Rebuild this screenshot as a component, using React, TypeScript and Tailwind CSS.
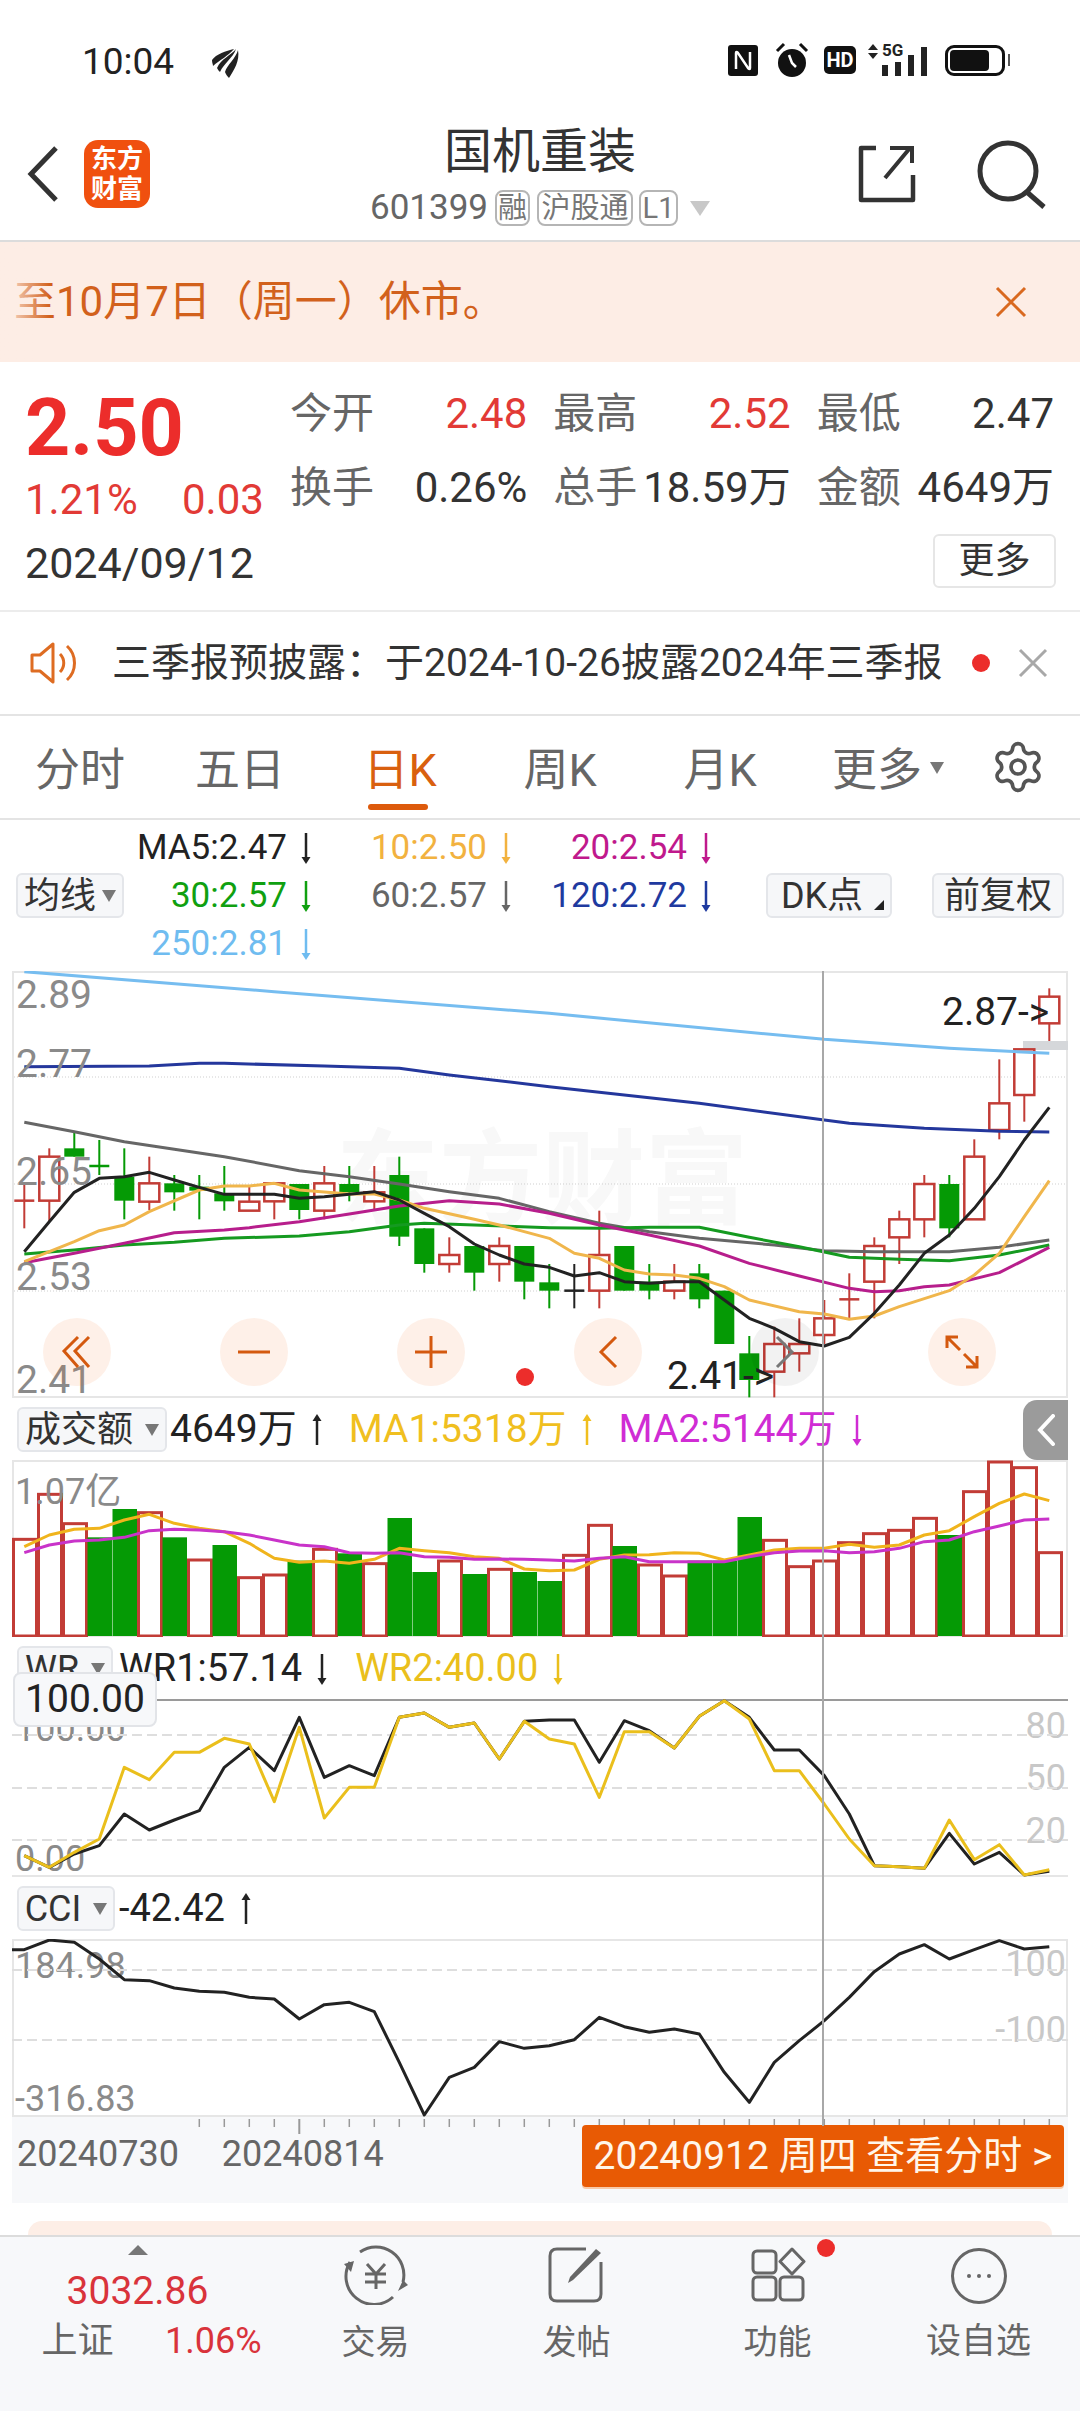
import { Settings } from 'lucide-react';

// chart data is read off the picture: "z" values are pixel rows in the reference crops
type Candle = [number, number, number, number, 'r' | 'g' | 'k'];

const CANDLES: Candle[] = [
  [675, 722, 722, 805, 'r'], [565, 590, 722, 785, 'r'], [515, 565, 590, 590, 'g'], [540, 618, 618, 645, 'g'],
  [565, 650, 722, 778, 'g'], [590, 670, 725, 750, 'r'], [645, 670, 697, 752, 'g'], [645, 680, 692, 778, 'g'],
  [618, 700, 724, 752, 'g'], [680, 725, 752, 752, 'r'], [670, 670, 724, 778, 'r'], [672, 672, 750, 778, 'g'],
  [618, 670, 752, 778, 'r'], [618, 672, 697, 724, 'g'], [618, 697, 724, 750, 'r'], [590, 645, 830, 858, 'g'],
  [805, 805, 912, 938, 'g'], [832, 885, 912, 938, 'r'], [858, 858, 938, 992, 'g'], [832, 858, 912, 965, 'r'],
  [858, 858, 965, 1018, 'g'], [912, 967, 992, 1045, 'g'], [912, 992, 992, 1045, 'k'], [752, 885, 992, 1045, 'r'],
  [858, 858, 992, 992, 'g'], [912, 965, 992, 1018, 'g'], [912, 965, 992, 1018, 'r'], [912, 940, 1018, 1045, 'g'],
  [992, 992, 1152, 1152, 'g'], [1128, 1180, 1260, 1312, 'g'], [1100, 1152, 1235, 1312, 'r'], [1075, 1152, 1180, 1235, 'r'],
  [1020, 1075, 1125, 1152, 'r'], [940, 1018, 1018, 1075, 'r'], [832, 858, 965, 1075, 'r'], [752, 778, 832, 912, 'r'],
  [645, 672, 778, 832, 'r'], [645, 672, 805, 832, 'g'], [538, 590, 778, 778, 'r'], [298, 430, 510, 538, 'r'],
  [268, 268, 405, 485, 'r'], [85, 110, 190, 243, 'r'],
];

const MA_LINES: { color: string; points: number[][] }[] = [
  { color: '#76bdf0', points: [[0, 35], [10, 95], [21, 160], [32, 238], [37, 265], [41, 280]] },
  { color: '#24379c', points: [[0, 320], [5, 318], [7, 310], [8, 310], [12, 318], [15, 325], [17, 345], [21, 380], [27, 430], [32, 480], [33, 490], [36, 505], [39, 514], [41, 516]] },
  { color: '#666666', points: [[0, 487], [2, 515], [4, 545], [6, 568], [8, 590], [11, 632], [13, 650], [15, 672], [17, 695], [19, 715], [21, 755], [23, 790], [25, 815], [27, 835], [30, 855], [32, 872], [34, 875], [37, 875], [39, 862], [41, 840]] },
  { color: '#159a20', points: [[0, 882], [2, 870], [4, 855], [6, 847], [8, 835], [11, 828], [13, 815], [15, 795], [16, 790], [21, 803], [23, 805], [25, 802], [27, 802], [29, 832], [31, 860], [33, 892], [35, 898], [37, 902], [39, 885], [41, 855]] },
  { color: '#b71e8c', points: [[0, 908], [2, 880], [4, 850], [6, 818], [8, 810], [9, 803], [11, 785], [13, 762], [15, 738], [17, 722], [19, 732], [21, 760], [23, 795], [25, 825], [27, 858], [29, 910], [31, 948], [33, 985], [34, 995], [35, 992], [36, 980], [37, 975], [39, 938], [41, 862]] },
  { color: '#f0b64c', points: [[0, 905], [2, 845], [3, 812], [4, 795], [5, 755], [7, 690], [8, 678], [9, 678], [10, 670], [11, 690], [13, 702], [14, 702], [15, 720], [16, 745], [18, 778], [19, 795], [21, 835], [22, 880], [23, 895], [24, 930], [25, 942], [26, 945], [27, 955], [28, 980], [29, 1020], [31, 1055], [32, 1062], [33, 1078], [34, 1068], [35, 1040], [37, 992], [38, 945], [39, 880], [40, 770], [41, 662]] },
];

const MA5 = [875, 785, 697, 655, 650, 637, 660, 682, 703, 703, 703, 715, 710, 703, 695, 720, 760, 800, 852, 885, 912, 922, 948, 938, 965, 970, 965, 965, 1020, 1075, 1105, 1145, 1158, 1132, 1060, 975, 880, 825, 745, 650, 540, 442];

const VOLUMES: [number, 'r' | 'g'][] = [
  [415, 'r'], [280, 'r'], [368, 'r'], [412, 'g'], [327, 'g'], [335, 'r'], [412, 'g'], [477, 'r'], [435, 'g'], [530, 'r'],
  [522, 'r'], [482, 'g'], [445, 'r'], [460, 'g'], [488, 'r'], [354, 'g'], [516, 'g'], [480, 'r'], [522, 'g'], [505, 'r'],
  [516, 'g'], [543, 'g'], [463, 'r'], [373, 'r'], [438, 'g'], [492, 'r'], [525, 'r'], [482, 'g'], [482, 'g'], [351, 'g'],
  [418, 'r'], [497, 'r'], [480, 'r'], [425, 'r'], [398, 'r'], [388, 'r'], [352, 'r'], [405, 'g'], [272, 'r'], [183, 'r'],
  [200, 'r'], [455, 'r'],
];
const VOL_MA1 = [440, 405, 388, 385, 360, 343, 370, 385, 395, 430, 475, 487, 483, 490, 478, 445, 452, 458, 470, 475, 507, 512, 510, 478, 465, 464, 458, 460, 480, 465, 450, 445, 445, 433, 442, 435, 405, 392, 350, 310, 282, 302];
const VOL_MA2 = [458, 435, 423, 420, 412, 392, 388, 390, 395, 405, 420, 435, 440, 458, 460, 458, 470, 472, 478, 477, 478, 480, 483, 475, 470, 485, 485, 485, 485, 470, 458, 453, 452, 458, 455, 445, 425, 420, 395, 378, 360, 357];

const WR1 = [650, 685, 645, 620, 525, 573, 543, 515, 385, 325, 395, 235, 415, 380, 410, 235, 222, 265, 252, 360, 247, 243, 243, 370, 245, 275, 327, 232, 185, 235, 333, 333, 410, 525, 680, 683, 688, 583, 675, 640, 708, 697];
const WR2 = [650, 685, 640, 600, 385, 422, 340, 340, 298, 315, 488, 265, 537, 445, 445, 235, 222, 265, 252, 360, 247, 300, 315, 475, 278, 278, 327, 232, 185, 240, 395, 395, 495, 600, 680, 683, 688, 543, 662, 617, 708, 692];
const CCI = [212, 183, 190, 240, 302, 305, 327, 337, 340, 355, 360, 420, 377, 370, 398, 550, 708, 595, 565, 488, 508, 500, 482, 415, 443, 460, 450, 465, 580, 670, 550, 485, 425, 355, 278, 225, 197, 240, 212, 185, 210, 203];

const cx = (i: number) => 12.3 + 25 * i;
const dense = (arr: number[], off: number) => arr.map((z, i) => `${cx(i)},${z / 3 - off}`).join(' ');
const sparse = (arr: number[][], off: number) => arr.map(([i, z]) => `${cx(i)},${z / 3 - off}`).join(' ');

const RED = '#c23c36';
const GREEN = '#059a05';

function Arrow({ up, color }: { up?: boolean; color: string }) {
  return (
    <svg width="14" height="36" viewBox="0 0 14 36" className="shrink-0">
      {up ? (
        <>
          <line x1="7" y1="6" x2="7" y2="33" stroke={color} strokeWidth="2.5" />
          <path d="M2.5 9 L7 2 L11.5 9 Z" fill={color} />
        </>
      ) : (
        <>
          <line x1="7" y1="3" x2="7" y2="30" stroke={color} strokeWidth="2.5" />
          <path d="M2.5 27 L7 34 L11.5 27 Z" fill={color} />
        </>
      )}
    </svg>
  );
}

function Caret() {
  return <span className="inline-block border-x-[7px] border-t-[12px] border-x-transparent border-t-[#777]" />;
}

function MaValue({ text, color }: { text: string; color: string }) {
  return (
    <div className="flex items-center justify-end gap-[12px] pr-[2px] text-[35px] leading-[48px]" style={{ color }}>
      <span>{text}</span>
      <Arrow color={color} />
    </div>
  );
}

function Quote({ label, value, color }: { label: string; value: string; color: string }) {
  return (
    <div className="flex h-[44px] items-center justify-between text-[42px] leading-[44px]">
      <span className="text-[#666]">{label}</span>
      <span className={color}>{value}</span>
    </div>
  );
}

function StatusBar() {
  return (
    <div className="flex h-[110px] items-start pl-[82px] pt-[42px] text-[#222]">
      <span className="text-[37px] leading-[40px]">10:04</span>
      <svg width="30" height="34" viewBox="0 0 30 34" className="ml-[37px] mt-[4px]">
        <path d="M23 3 C15 5 5 8 1 14 C1 17 2 18 2 20 C9 14 17 10 23 3 Z" fill="#222" />
        <path d="M25 3 C20 9 10 13 6 22 C7 24 8 25 9 26 C13 17 22 12 25 3 Z" fill="#222" />
        <path d="M27 4 C25 12 16 19 14 26 C15 29 17 31 18 32 C23 24 29 15 27 4 Z" fill="#222" />
      </svg>
      <div className="ml-auto mr-[70px] flex items-center">
        <svg width="30" height="31" viewBox="0 0 30 31">
          <rect width="30" height="31" rx="3" fill="#111" />
          <path d="M8 24 V8 Q8 6 10 8 L20 23 Q22 25 22 23 V7" stroke="#fff" strokeWidth="2.5" fill="none" />
        </svg>
        <svg width="36" height="36" viewBox="0 0 36 36" className="ml-[16px]">
          <circle cx="18" cy="21" r="14" fill="#111" />
          <path d="M15 13 L18 21 L22 25" stroke="#fff" strokeWidth="2.5" fill="none" />
          <path d="M3 9 L10 2 M33 9 L26 2" stroke="#111" strokeWidth="3" />
        </svg>
        <span className="ml-[14px] flex h-[28px] w-[32px] items-center justify-center rounded-[5px] bg-[#111] text-[20px] font-bold leading-none text-white">
          HD
        </span>
        <div className="relative ml-[12px] h-[32px] w-[59px]">
          <span className="absolute left-[14px] top-[-2px] text-[17px] font-bold leading-[17px]">5G</span>
          <span className="absolute left-0 top-0 border-x-[5px] border-b-[6px] border-x-transparent border-b-[#222]" />
          <span className="absolute left-0 top-[9px] border-x-[5px] border-t-[6px] border-x-transparent border-t-[#222]" />
          <div className="absolute bottom-0 right-0 flex items-end gap-[7px]">
            <span className="h-[11px] w-[6px] bg-[#222]" />
            <span className="h-[14px] w-[6px] bg-[#222]" />
            <span className="h-[21px] w-[6px] bg-[#222]" />
            <span className="h-[29px] w-[6px] bg-[#222]" />
          </div>
        </div>
        <div className="ml-[18px] flex items-center">
          <div className="flex h-[31px] w-[60px] items-center rounded-[9px] border-[3px] border-[#111] p-[2px]">
            <span className="h-full w-[39px] rounded-[4px] bg-[#111]" />
          </div>
          <span className="ml-[3px] h-[12px] w-[2px] bg-[#555]" />
        </div>
      </div>
    </div>
  );
}

function Header() {
  return (
    <div className="flex h-[132px] items-start border-b-2 border-[#dcdcdc]">
      <div className="flex w-[280px] items-center pl-[27px] pt-[30px]">
        <svg width="32" height="56" viewBox="0 0 32 56">
          <path d="M29 2 L4 28 L29 54" stroke="#333" strokeWidth="5" fill="none" />
        </svg>
        <div className="ml-[25px] flex h-[68px] w-[66px] items-center justify-center rounded-[14px] bg-[#f0500f] text-center text-[26px] font-bold leading-[30px] text-white">
          东方
          <br />
          财富
        </div>
      </div>
      <div className="flex flex-1 flex-col items-center pt-[14px]">
        <div className="text-[48px] leading-[56px] text-[#333]">国机重装</div>
        <div className="mt-[8px] flex h-[40px] items-center text-[#777]">
          <span className="text-[35px] leading-[40px] text-[#666]">601399</span>
          <span className="ml-[7px] flex h-[36px] w-[35px] items-center justify-center rounded-[8px] border-2 border-[#b5b5b5] text-[29px] leading-none">融</span>
          <span className="ml-[7px] flex h-[36px] w-[96px] items-center justify-center rounded-[8px] border-2 border-[#b5b5b5] text-[29px] leading-none">沪股通</span>
          <span className="ml-[6px] flex h-[36px] w-[39px] items-center justify-center rounded-[8px] border-2 border-[#b5b5b5] text-[29px] leading-none">L1</span>
          <span className="ml-[12px] border-x-[10px] border-t-[15px] border-x-transparent border-t-[#c8c8c8]" />
        </div>
      </div>
      <div className="flex w-[280px] items-start justify-end pr-[32px] pt-[29px]">
        <svg width="60" height="60" viewBox="0 0 60 60" className="mt-[6px]">
          <path d="M20 3 H5 V55 H57 V30" stroke="#333" strokeWidth="4.5" fill="none" strokeLinejoin="round" />
          <path d="M29 33 L54 3 M34 3 H56 V18" stroke="#333" strokeWidth="4" fill="none" />
        </svg>
        <svg width="72" height="70" viewBox="0 0 72 70" className="ml-[60px]">
          <circle cx="32" cy="32" r="28" stroke="#333" strokeWidth="5" fill="none" />
          <path d="M52 54 L68 68" stroke="#333" strokeWidth="5" />
        </svg>
      </div>
    </div>
  );
}

function Banner() {
  return (
    <div className="relative flex h-[120px] items-center justify-between bg-[#fdede5] pl-[14px] pr-[52px] text-[#d2611c]">
      <span className="text-[42px] leading-[48px]">至10月7日（周一）休市。</span>
      <svg width="34" height="34" viewBox="0 0 34 34">
        <path d="M3 3 L31 31 M31 3 L3 31" stroke="#d9691f" strokeWidth="3" />
      </svg>
      <span className="absolute bottom-0 left-0 top-0 w-[50px] bg-gradient-to-r from-[#fdede5] to-transparent" />
    </div>
  );
}

function QuoteBlock() {
  return (
    <div className="flex h-[250px] border-b-2 border-[#ececec]">
      <div className="flex w-[290px] flex-col pl-[25px] pt-[25px]">
        <div className="h-[82px] text-[79px] font-bold leading-[82px] text-[#ec2d2b]">2.50</div>
        <div className="mt-[10px] flex h-[42px] items-center text-[42px] leading-[42px] text-[#e23a36]">
          <span className="w-[157px]">1.21%</span>
          <span>0.03</span>
        </div>
        <div className="mt-[21px] text-[43px] leading-[42px] text-[#333]">2024/09/12</div>
      </div>
      <div className="flex flex-1 flex-col pr-[26px] pt-[30px]">
        <div className="grid grid-cols-3 gap-x-[26px] gap-y-[30px]">
          <Quote label="今开" value="2.48" color="text-[#e23a36]" />
          <Quote label="最高" value="2.52" color="text-[#e23a36]" />
          <Quote label="最低" value="2.47" color="text-[#333]" />
          <Quote label="换手" value="0.26%" color="text-[#333]" />
          <Quote label="总手" value="18.59万" color="text-[#333]" />
          <Quote label="金额" value="4649万" color="text-[#333]" />
        </div>
        <button className="mr-[-2px] ml-auto mt-[24px] h-[54px] w-[123px] rounded-[6px] border-2 border-[#e6e6e6] text-[36px] leading-none text-[#333]">
          更多
        </button>
      </div>
    </div>
  );
}

function Notice() {
  return (
    <div className="flex h-[104px] items-center border-b-2 border-[#e4e4e4] pl-[30px] text-[#333]">
      <svg width="50" height="44" viewBox="0 0 50 44">
        <path d="M2 14 H10 L23 3 V41 L10 30 H2 Z" stroke="#de6c22" strokeWidth="3" fill="none" strokeLinejoin="round" />
        <path d="M30 13 C35 18 35 26 30 31 M37 5 C47 14 47 30 37 39" stroke="#de6c22" strokeWidth="3" fill="none" />
      </svg>
      <span className="ml-[32px] w-[830px] whitespace-nowrap text-[39px] leading-[48px]">三季报预披露：于2024-10-26披露2024年三季报</span>
      <span className="ml-[30px] h-[18px] w-[18px] rounded-full bg-[#ec2d2b]" />
      <svg width="30" height="30" viewBox="0 0 30 30" className="ml-[28px]">
        <path d="M2 2 L28 28 M28 2 L2 28" stroke="#a8a8a8" strokeWidth="3" />
      </svg>
    </div>
  );
}

function Tabs() {
  const cell = 'relative flex h-full w-[160px] items-center justify-center pt-[8px]';
  return (
    <div className="flex h-[104px] items-center border-b-2 border-[#e4e4e4] text-[45px] leading-[50px] text-[#666]">
      <div className={cell}>分时</div>
      <div className={cell}>五日</div>
      <div className={`${cell} text-[#d9600f]`}>
        日K
        <span className="absolute bottom-[8px] left-[48px] h-[6px] w-[60px] rounded-full bg-[#dd5a0c]" />
      </div>
      <div className={cell}>周K</div>
      <div className={cell}>月K</div>
      <div className={`${cell} pl-[16px]`}>
        更多
        <span className="ml-[8px] mt-[-6px] border-x-[7px] border-t-[12px] border-x-transparent border-t-[#777]" />
      </div>
      <Settings size={56} strokeWidth={1.6} color="#555" className="ml-[30px]" />
    </div>
  );
}

function Toolbar() {
  const btn = 'flex h-[45px] items-center justify-center rounded-[6px] border-2 border-[#e4e6ea] bg-[#f6f7f9] text-[36px] leading-none text-[#333]';
  return (
    <div className="flex h-[151px] items-center pl-[16px]">
      <div className={`${btn} w-[108px] gap-[6px]`}>
        均线
        <Caret />
      </div>
      <div className="grid h-[144px] grid-cols-[191px_200px_200px]">
        <MaValue text="MA5:2.47" color="#222222" />
        <MaValue text="10:2.50" color="#f2b23f" />
        <MaValue text="20:2.54" color="#c0198c" />
        <MaValue text="30:2.57" color="#10a010" />
        <MaValue text="60:2.57" color="#666666" />
        <MaValue text="120:2.72" color="#1f3a9f" />
        <MaValue text="250:2.81" color="#6fbcf0" />
      </div>
      <div className={`${btn} relative ml-[51px] w-[126px] pr-[14px]`}>
        DK点
        <span className="absolute bottom-[6px] right-[6px] border-b-[10px] border-l-[10px] border-b-[#222] border-l-transparent" />
      </div>
      <div className={`${btn} ml-[40px] w-[132px]`}>前复权</div>
    </div>
  );
}

function MainChart() {
  const lbl = 'absolute left-[4px] text-[39px] leading-[40px] text-[#8a8a8a]';
  const circle = 'flex h-[68px] w-[68px] items-center justify-center rounded-full bg-[#f26a1b]/10';
  return (
    <div className="relative mx-[12px] h-[427px] shadow-[inset_0_0_0_2px_#e6e6e6]">
      <span className="absolute left-[324px] top-[150px] text-[103px] font-bold leading-[120px] text-[#f8f8f8]">东方财富</span>
      <svg viewBox="0 0 1056 427" className="absolute inset-0 h-full w-full">
        {[106, 213, 320].map((y) => (
          <line key={y} x1="2" x2="1054" y1={y} y2={y} stroke="#cfcfcf" strokeWidth="1" strokeDasharray="1 2" />
        ))}
        <rect x="1011" y="70" width="45" height="9" fill="#d5d7da" />
        {CANDLES.map(([high, top, bottom, low, c], i) => {
          const color = c === 'r' ? RED : c === 'g' ? GREEN : '#222';
          const x = cx(i);
          const doji = top === bottom;
          return (
            <g key={i}>
              <line x1={x} x2={x} y1={high / 3 - 11} y2={low / 3 - 11} stroke={color} strokeWidth="2" />
              {doji ? (
                <line x1={x - 10} x2={x + 10} y1={top / 3 - 11} y2={top / 3 - 11} stroke={color} strokeWidth="2.5" />
              ) : c === 'g' ? (
                <rect x={x - 10} y={top / 3 - 11} width="20" height={(bottom - top) / 3} fill={GREEN} />
              ) : (
                <rect x={x - 10} y={top / 3 - 11} width="20" height={(bottom - top) / 3} fill="#fff" stroke={RED} strokeWidth="2.5" />
              )}
            </g>
          );
        })}
        {MA_LINES.map((l) => (
          <polyline key={l.color} points={sparse(l.points, 11)} fill="none" stroke={l.color} strokeWidth="3" strokeLinejoin="round" />
        ))}
        <polyline points={dense(MA5, 11)} fill="none" stroke="#222" strokeWidth="3" strokeLinejoin="round" />
      </svg>
      <span className={`${lbl} top-[4px]`}>2.89</span>
      <span className={`${lbl} top-[73px]`}>2.77</span>
      <span className={`${lbl} top-[181px]`}>2.65</span>
      <span className={`${lbl} top-[286px]`}>2.53</span>
      <span className={`${lbl} top-[389px]`}>2.41</span>
      <span className="absolute left-[930px] top-[21px] text-[39px] leading-[40px] text-[#222]">2.87-&gt;</span>
      <span className="absolute left-[655px] top-[385px] text-[39px] leading-[40px] text-[#222]">2.41-&gt;</span>
      <div className="absolute left-[31px] top-[347px] flex gap-[109px]">
        <div className={circle}>
          <svg width="32" height="34" viewBox="0 0 32 34">
            <path d="M17 2 L3 16 L17 32 M28 2 L14 16 L28 32" stroke="#d4590f" strokeWidth="3" fill="none" />
          </svg>
        </div>
        <div className={circle}>
          <svg width="34" height="34" viewBox="0 0 34 34">
            <path d="M1 17 H33" stroke="#d4590f" strokeWidth="3" />
          </svg>
        </div>
        <div className={circle}>
          <svg width="34" height="34" viewBox="0 0 34 34">
            <path d="M1 17 H33 M17 1 V33" stroke="#d4590f" strokeWidth="3" />
          </svg>
        </div>
        <div className={circle}>
          <svg width="20" height="34" viewBox="0 0 20 34">
            <path d="M18 2 L3 17 L18 32" stroke="#d4590f" strokeWidth="3" fill="none" />
          </svg>
        </div>
        <div className="flex h-[68px] w-[68px] items-center justify-center rounded-full bg-black/5">
          <svg width="20" height="34" viewBox="0 0 20 34">
            <path d="M2 2 L17 17 L2 32" stroke="#777" strokeWidth="3" fill="none" />
          </svg>
        </div>
        <div className={circle}>
          <svg width="36" height="36" viewBox="0 0 36 36">
            <path d="M3 14 V3 H14 M3 3 L16 16 M33 22 V33 H22 M33 33 L20 20" stroke="#d4590f" strokeWidth="3" fill="none" />
          </svg>
        </div>
      </div>
      <span className="absolute left-[504px] top-[397px] h-[18px] w-[18px] rounded-full bg-[#ec2d2b]" />
    </div>
  );
}

function PanelHead({ name, w, children }: { name: string; w: string; children: React.ReactNode }) {
  return (
    <div className="flex h-[62px] items-start pl-[17px] pt-[9px] text-[38px] leading-[45px]">
      <div className={`flex h-[45px] items-center justify-center gap-[12px] rounded-[6px] border-2 border-[#e4e6ea] bg-[#f6f7f9] text-[36px] leading-none text-[#333] ${w}`}>
        {name}
        <Caret />
      </div>
      {children}
    </div>
  );
}

function VolumeChart() {
  return (
    <div className="relative mx-[12px] h-[177px] shadow-[inset_0_0_0_2px_#e6e6e6]">
      <svg viewBox="0 0 1056 177" className="absolute inset-0 h-full w-full">
        {VOLUMES.map(([z, c], i) =>
          c === 'g' ? (
            <rect key={i} x={25 * i + 0.5} y={z / 3 - 60} width="24.5" height={176 - (z / 3 - 60)} fill={GREEN} />
          ) : (
            <rect key={i} x={25 * i + 1.5} y={z / 3 - 59} width="23" height={175 - (z / 3 - 60)} fill="#fff" stroke={RED} strokeWidth="3" />
          ),
        )}
        <polyline points={dense(VOL_MA1, 60)} fill="none" stroke="#f0b41c" strokeWidth="3" strokeLinejoin="round" />
        <polyline points={dense(VOL_MA2, 60)} fill="none" stroke="#c933c9" strokeWidth="3" strokeLinejoin="round" />
      </svg>
      <span className="absolute left-[3px] top-[12px] text-[36px] leading-[40px] text-[#8a8a8a]">1.07亿</span>
    </div>
  );
}

function WrChart() {
  const lbl = 'absolute text-[36px] leading-[40px]';
  return (
    <div className="relative mx-[12px] h-[178px] shadow-[inset_0_-2px_0_0_#e6e6e6]">
      <span className={`${lbl} left-[3px] top-[10px] text-[#8a8a8a]`}>100.00</span>
      <span className={`${lbl} left-[3px] top-[140px] text-[#8a8a8a]`}>0.00</span>
      <span className={`${lbl} right-[2px] top-[7px] text-[#c8c8c8]`}>80</span>
      <span className={`${lbl} right-[2px] top-[59px] text-[#c8c8c8]`}>50</span>
      <span className={`${lbl} right-[2px] top-[112px] text-[#c8c8c8]`}>20</span>
      <svg viewBox="0 0 1056 178" className="absolute inset-0 h-full w-full">
        <line x1="130" x2="1056" y1="1" y2="1" stroke="#9a9a9a" strokeWidth="2" />
        {[36, 89, 141].map((y) => (
          <line key={y} x1="0" x2="1056" y1={y} y2={y} stroke="#dedede" strokeWidth="2" strokeDasharray="10 5" />
        ))}
        <polyline points={dense(WR1, 60)} fill="none" stroke="#222" strokeWidth="3" strokeLinejoin="round" />
        <polyline points={dense(WR2, 60)} fill="none" stroke="#eabf1c" strokeWidth="3" strokeLinejoin="round" />
      </svg>
      <div className="absolute left-[1px] top-[-27px] z-10 flex h-[55px] w-[144px] items-center justify-center rounded-[8px] border-2 border-[#e2e4e8] bg-[#f7f8fa] text-[39px] leading-none text-[#222]">
        100.00
      </div>
    </div>
  );
}

function CciChart() {
  const lbl = 'absolute text-[36px] leading-[40px]';
  return (
    <div className="relative mx-[12px] h-[178px] shadow-[inset_0_0_0_2px_#e6e6e6]">
      <span className={`${lbl} left-[3px] top-[7px] text-[#8a8a8a]`}>184.98</span>
      <span className={`${lbl} left-[3px] top-[140px] text-[#8a8a8a]`}>-316.83</span>
      <span className={`${lbl} right-[2px] top-[5px] text-[#c8c8c8]`}>100</span>
      <span className={`${lbl} right-[2px] top-[71px] text-[#c8c8c8]`}>-100</span>
      <svg viewBox="0 0 1056 178" className="absolute inset-0 h-full w-full">
        {[31, 101].map((y) => (
          <line key={y} x1="0" x2="1056" y1={y} y2={y} stroke="#dedede" strokeWidth="2" strokeDasharray="10 5" />
        ))}
        <polyline points={`0,${212 / 3 - 60} ${dense(CCI, 60)}`} fill="none" stroke="#222" strokeWidth="3" strokeLinejoin="round" />
      </svg>
    </div>
  );
}

function AxisStrip() {
  const ticks = Array.from({ length: 35 }, (_, k) => k + 7);
  return (
    <div className="relative mx-[12px] flex h-[86px] items-start bg-[#f7f8fa] pl-[5px] pr-[4px] text-[36px] leading-[40px] text-[#666]">
      <svg viewBox="0 0 1056 20" className="absolute left-0 top-0 h-[20px] w-full">
        {ticks.map((i) => (
          <line key={i} x1={cx(i)} x2={cx(i)} y1="2" y2={i === 11 ? 17 : 10} stroke="#999" strokeWidth={i === 11 ? 2 : 1.5} />
        ))}
      </svg>
      <span className="mt-[17px]">20240730</span>
      <span className="ml-[43px] mt-[17px]">20240814</span>
      <div className="relative ml-auto mt-[8px] flex h-[62px] w-[482px] items-center justify-center rounded-[4px] bg-[#e85a04] text-[39px] leading-none text-[#fff6ea] shadow-[0_2px_0_#f8c9a8]">
        20240912 周四 查看分时 &gt;
      </div>
    </div>
  );
}

function BottomBar() {
  const label = 'text-[34px] leading-[40px] text-[#666]';
  const item = 'flex w-[201px] flex-col items-center';
  const s = { stroke: '#666', strokeWidth: 3, fill: 'none' };
  return (
    <div className="flex h-[176px] border-t-2 border-[#dcdcdc] bg-[#f7f8fa]">
      <div className="flex w-[275px] flex-col items-center pt-[8px]">
        <span className="border-x-[10px] border-b-[10px] border-x-transparent border-b-[#777]" />
        <span className="mt-[14px] text-[39px] leading-[44px] text-[#d9333b]">3032.86</span>
        <div className="ml-[28px] mt-[6px] flex w-[220px] items-center justify-between text-[36px] leading-[44px]">
          <span className="text-[#666]">上证</span>
          <span className="text-[#d9333b]">1.06%</span>
        </div>
      </div>
      <div className={item}>
        <svg width="66" height="60" viewBox="0 0 66 60" className="mt-[8px]" {...s}>
          <path d="M17 7 A28 28 0 0 1 60 37 M50 52 A28 28 0 0 1 7 17" />
          <path d="M1 19 L11 16 L8 27 Z M55 46 L65 40 L60 35 Z" fill="#666" stroke="none" />
          <path d="M24 19 L33 29 L42 19 M33 29 V44 M22 29 H43 M22 37 H43" />
        </svg>
        <span className={`${label} mt-[17px]`}>交易</span>
      </div>
      <div className={item}>
        <svg width="58" height="56" viewBox="0 0 58 56" className="mt-[10px]" {...s}>
          <path d="M38 2 H9 Q2 2 2 9 V47 Q2 54 9 54 H46 Q53 54 53 47 V15" />
          <path d="M48 2 L53 6 L25 33 L20 36 L22 30 Z" fill="#666" stroke="none" />
        </svg>
        <span className={`${label} mt-[19px]`}>发帖</span>
      </div>
      <div className={`${item} relative`}>
        <svg width="56" height="56" viewBox="0 0 56 56" className="mt-[10px]" {...s}>
          <rect x="3" y="4" width="23" height="22" rx="4" />
          <path d="M42 2 L54 14.5 L42 27 L30 14.5 Z" strokeLinejoin="round" />
          <rect x="3" y="30" width="23" height="23" rx="4" />
          <rect x="30" y="30" width="23" height="23" rx="4" />
        </svg>
        <span className={`${label} mt-[19px]`}>功能</span>
        <span className="absolute left-[140px] top-[2px] h-[18px] w-[18px] rounded-full bg-[#ec2d2b]" />
      </div>
      <div className={item}>
        <svg width="58" height="58" viewBox="0 0 58 58" className="mt-[10px]" {...s}>
          <circle cx="29" cy="29" r="26.5" />
          <circle cx="19" cy="29" r="2" fill="#666" stroke="none" />
          <circle cx="29" cy="29" r="2" fill="#666" stroke="none" />
          <circle cx="39" cy="29" r="2" fill="#666" stroke="none" />
        </svg>
        <span className="mt-[17px] text-[35px] leading-[40px] text-[#666]">设自选</span>
      </div>
    </div>
  );
}

export default function App() {
  return (
    <div className="flex h-[2412px] w-[1080px] flex-col overflow-hidden bg-white font-[Roboto,'Noto_Sans_CJK_SC',sans-serif]">
      <StatusBar />
      <Header />
      <Banner />
      <QuoteBlock />
      <Notice />
      <Tabs />
      <Toolbar />

      {/* chart stack, crosshair runs over all panels */}
      <div className="relative">
        <MainChart />
        <PanelHead name="成交额" w="w-[150px]">
          <span className="ml-[3px] text-[39px] text-[#222]">4649万</span>
          <span className="ml-[13px] mt-[5px]"><Arrow up color="#222222" /></span>
          <span className="ml-[25px] text-[39px] text-[#f0bf1f]">MA1:5318万</span>
          <span className="ml-[13px] mt-[5px]"><Arrow up color="#f0bf1f" /></span>
          <span className="ml-[25px] text-[39px] text-[#d02cd4]">MA2:5144万</span>
          <span className="ml-[14px] mt-[5px]"><Arrow color="#d02cd4" /></span>
          <div className="ml-auto mr-[12px] mt-[-7px] flex h-[60px] w-[45px] items-center justify-center rounded-l-[14px] bg-[#9b9b9b]">
            <svg width="18" height="32" viewBox="0 0 18 32">
              <path d="M16 2 L3 16 L16 30" stroke="#fff" strokeWidth="4" fill="none" strokeLinecap="round" />
            </svg>
          </div>
        </PanelHead>
        <VolumeChart />
        <PanelHead name="WR" w="w-[96px]">
          <span className="ml-[6px] text-[#222]">WR1:57.14</span>
          <span className="ml-[13px] mt-[5px]"><Arrow color="#222222" /></span>
          <span className="ml-[26px] text-[#eabf1c]">WR2:40.00</span>
          <span className="ml-[13px] mt-[5px]"><Arrow color="#eabf1c" /></span>
        </PanelHead>
        <WrChart />
        <PanelHead name="CCI" w="w-[98px]">
          <span className="ml-[4px] text-[#222]">-42.42</span>
          <span className="ml-[14px] mt-[5px]"><Arrow up color="#222222" /></span>
        </PanelHead>
        <CciChart />
        <AxisStrip />
        <span className="absolute left-[822px] top-0 h-[1155px] w-[2px] bg-[#a8a8a8]" />
      </div>

      <div className="flex h-[32px] items-end px-[28px]">
        <div className="h-[14px] w-full rounded-t-[28px] bg-[#fdeee6]" />
      </div>
      <BottomBar />
    </div>
  );
}
